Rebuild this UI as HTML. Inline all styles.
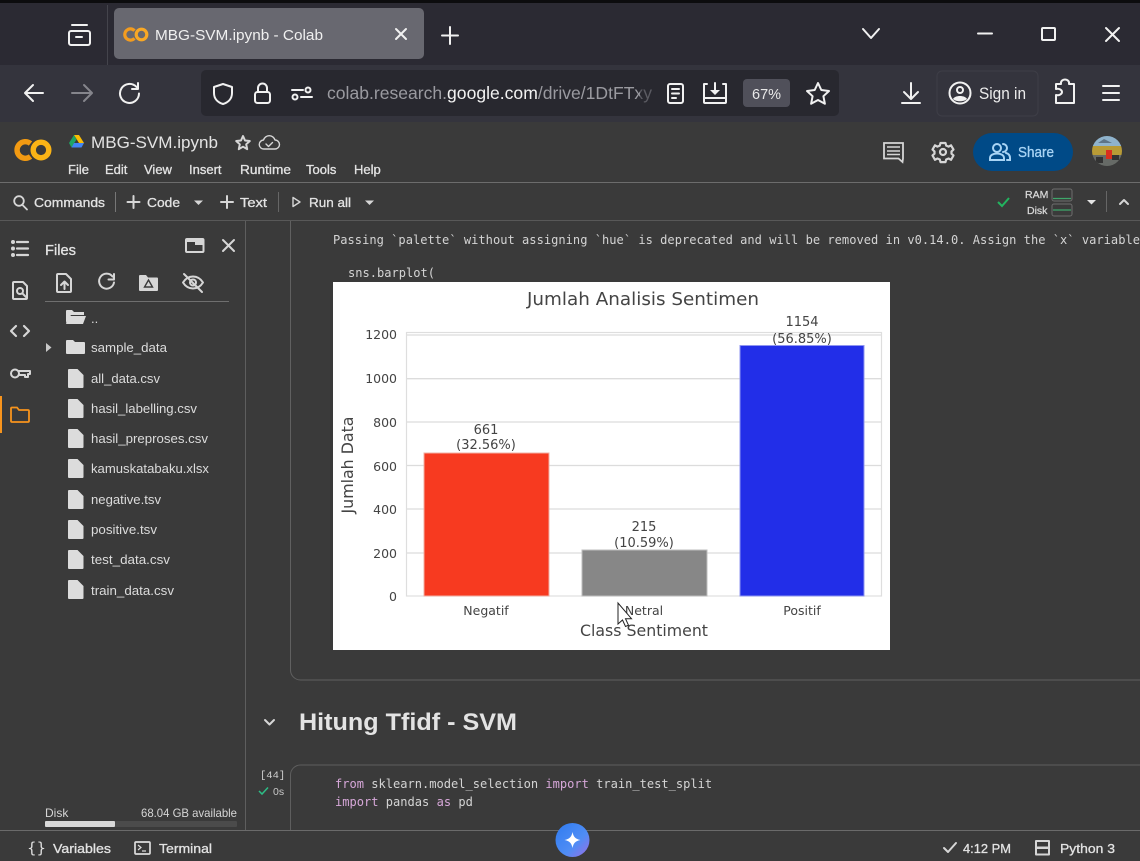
<!DOCTYPE html>
<html lang="en"><head><meta charset="utf-8"><title>MBG-SVM.ipynb - Colab</title>
<style>
html,body{margin:0;padding:0;width:1140px;height:861px;overflow:hidden;background:#3a3a3a}
svg{display:block;filter:blur(.35px)}
text{font-family:"Liberation Sans",sans-serif;white-space:pre}
text.m{font-family:"DejaVu Sans Mono","Liberation Mono",monospace;font-size:12.05px;fill:#d4d4d4}
text.d,.d text{font-family:"DejaVu Sans",sans-serif;fill:#444}
.f{font-size:13px;fill:#dcdcdc}
.w{font-size:13px;fill:#e3e3e3;stroke:#e3e3e3;stroke-width:.3px}
.i{fill:none;stroke:#f1f1f1;stroke-width:2;stroke-linecap:round;stroke-linejoin:round}
.g{fill:none;stroke:#d6d6d6;stroke-width:2;stroke-linecap:round;stroke-linejoin:round}
</style></head><body>
<svg width="1140" height="861" viewBox="0 0 1140 861" xmlns="http://www.w3.org/2000/svg">
<!-- browser chrome -->
<rect width="1140" height="65" fill="#2b2a33"/>
<rect width="1140" height="3" fill="#0c0c0e"/>
<rect x="0" y="65" width="1140" height="57" fill="#34343d"/>
<rect x="107" y="5" width="1" height="60" fill="#44444c"/>
<rect x="114" y="8" width="310" height="51" rx="5" fill="#686870"/>
<g class="i"><rect x="69" y="31" width="21" height="14" rx="2"/><path d="M72 25h15M76 37h6"/></g>
<path d="M134.500 30.700a5.600 5.600 0 1 0 0 7.600" fill="none" stroke="#f39c1f" stroke-width="3.200"/>
<circle cx="141.500" cy="34.500" r="5.300" fill="none" stroke="#f9a825" stroke-width="3.200"/>
<text x="155" y="40" font-size="15" fill="#f0f0f0" textLength="168" lengthAdjust="spacingAndGlyphs">MBG-SVM.ipynb - Colab</text>
<path class="i" d="M396 29l10 10M406 29l-10 10"/>
<path class="i" d="M450 27v17M442 35.500h16"/>
<path class="i" d="M863 29l8 9 8-9" stroke-width="1.700"/>
<path class="i" d="M978 33.500h14" stroke-width="1.700"/>
<rect class="i" x="1042" y="28" width="13" height="12" rx="1" stroke-width="1.800"/>
<path class="i" d="M1106 28l13 13M1119 28l-13 13" stroke-width="1.800"/>
<path class="i" d="M43 93H25M33 85l-8 8 8 8" stroke-width="2.200"/>
<path class="i" d="M91 93H72M84 85l8 8-8 8" style="stroke:#85858c"/>
<path class="i" d="M136.500 87a9.500 9.500 0 1 0 2.500 6.500M138 83v6h-6"/>
<rect x="201" y="70" width="638" height="46" rx="5" fill="#28282f"/>
<path class="i" d="M223 84l9 3v6c0 6-4 9.500-9 11-5-1.500-9-5-9-11v-6z"/>
<g class="i"><rect x="255" y="92" width="15" height="11" rx="2.500"/><path d="M258 92v-4a4.500 4.500 0 0 1 9 0v4"/></g>
<g class="i" stroke-width="1.800"><path d="M292 90h11M301 97h11"/><circle cx="308" cy="90" r="2.500"/><circle cx="295" cy="97" r="2.500"/></g>
<text x="327" y="99" font-size="17.500" fill="#9a9aa0" textLength="325" lengthAdjust="spacingAndGlyphs">colab.research.<tspan fill="#f2f2f2">google.com</tspan>/drive/1DtFTxy</text>
<rect x="640" y="70" width="16" height="46" fill="#28282f" opacity=".55"/>
<g class="i" stroke-width="1.800"><rect x="668" y="84" width="15" height="19" rx="2"/><path d="M672 89h7M672 93.500h7M672 98h4"/></g>
<g class="i" stroke-width="1.800"><path d="M707 84h-3v18a1 1 0 0 0 1 1h20a1 1 0 0 0 1-1V84h-3M704 98h22"/><path d="M715 83v10"/></g><path d="M710 90h10l-5 5z" fill="#f1f1f1"/>
<rect x="743" y="79" width="47" height="28" rx="4" fill="#50505a"/>
<text x="752" y="99" font-size="14.500" fill="#e8e8e8">67%</text>
<path class="i" d="M818 83l3.300 7 7.700 1-5.600 5.200 1.500 7.600-6.900-3.800-6.900 3.800 1.500-7.600-5.600-5.200 7.700-1z"/>
<path class="i" d="M911 83v15M904 92l7 7 7-7M902 103h18"/>
<rect x="937" y="71" width="101" height="45" rx="5" fill="none" stroke="#3e3e47"/>
<g class="i"><circle cx="960" cy="93" r="10.500"/><circle cx="960" cy="90" r="3"/></g><path d="M953 99c2-4 12-4 14 0-3 3-11 3-14 0z" fill="#f1f1f1"/>
<text x="979" y="99" font-size="16.500" fill="#ececec" textLength="47" lengthAdjust="spacingAndGlyphs">Sign in</text>
<path class="i" d="M1056 103v-8c3 1 6-1 6-3s-3-4-6-3v-5h5c-1-6 9-6 8 0h5v19z" stroke-width="1.900"/>
<path class="i" d="M1103 86h16M1103 93h16M1103 100h16"/>
<!-- colab header -->
<rect x="0" y="122" width="1140" height="61" fill="#3a3a3a"/>
<rect x="0" y="182" width="1140" height="1" fill="#6c6c6c"/>
<path d="M30.500 143.500a8.300 8.300 0 1 0 0 13" fill="none" stroke="#f29a12" stroke-width="5.400"/>
<circle cx="41" cy="150" r="7.800" fill="none" stroke="#fbb416" stroke-width="5.400"/>
<path d="M74 135h5l5 8h-5z" fill="#fbbc04"/><path d="M74 135l-5 8 2.500 4.500 5-8z" fill="#1fa463"/><path d="M71.500 147.500h10l2.500-4.500H74z" fill="#4285f4"/>
<text x="91" y="148" font-size="17" fill="#e3e3e3" textLength="127" lengthAdjust="spacingAndGlyphs">MBG-SVM.ipynb</text>
<path class="g" stroke-width="1.700" d="M243 136l2 4.500 4.800.5-3.600 3.300 1 4.900-4.200-2.500-4.200 2.500 1-4.900-3.600-3.300 4.800-.5z"/>
<path class="g" d="M266 149h-2a4.500 4.500 0 0 1-.5-9 6 6 0 0 1 11.500 0 4.500 4.500 0 0 1 0 9zM266 144l2.500 2.500 4-4" style="stroke-width:1.400"/>
<g style="font-size:13.500px">
<text x="68" y="174" class="w" style="font-size:13px">File</text>
<text x="105" y="174" class="w" style="font-size:13px">Edit</text>
<text x="144" y="174" class="w" style="font-size:13px">View</text>
<text x="189" y="174" class="w" style="font-size:13px">Insert</text>
<text x="240" y="174" class="w" style="font-size:13px" textLength="51" lengthAdjust="spacingAndGlyphs">Runtime</text>
<text x="306" y="174" class="w" style="font-size:13px">Tools</text>
<text x="354" y="174" class="w" style="font-size:13px">Help</text>
</g>
<path d="M884 143h19v15.500l-.5 3.500-4-3.500h-14.500z" fill="none" stroke="#d6d6d6" stroke-width="1.800"/><path d="M887 147h13M887 151h13M887 154.500h13" stroke="#d6d6d6" stroke-width="1.600"/>
<g class="g" style="stroke-width:2.200"><circle cx="943" cy="152" r="3"/><path d="M940.500 143h5l.7 2.600 2.400 1 2.400-1.300 2.500 4.300-2 1.800v2.300l2 1.800-2.500 4.300-2.400-1.300-2.400 1-.7 2.600h-5l-.7-2.600-2.400-1-2.400 1.300-2.500-4.300 2-1.800v-2.300l-2-1.800 2.500-4.300 2.400 1.300 2.400-1z"/></g>
<rect x="973" y="133" width="100" height="38" rx="19" fill="#004a87"/>
<g fill="none" stroke="#a8d4f5" stroke-width="2" stroke-linecap="round"><circle cx="997" cy="148" r="4"/><path d="M990 160v-2c0-6 14-6 14 0v2zM1003 144a4 4 0 0 1 0 8M1007 160h3v-2c0-3-2-4.500-4-5"/></g>
<text x="1018" y="157" font-size="14.500" fill="#a8d4f5" stroke="#a8d4f5" stroke-width=".3" textLength="36" lengthAdjust="spacingAndGlyphs">Share</text>
<clipPath id="av"><circle cx="1107" cy="151" r="15"/></clipPath>
<g clip-path="url(#av)"><rect x="1092" y="136" width="30" height="10" fill="#8fb3cc"/><rect x="1092" y="146" width="30" height="9" fill="#b89b36"/><rect x="1092" y="155" width="30" height="12" fill="#666a66"/><rect x="1106" y="150" width="6" height="9" fill="#d8301f"/><path d="M1098 143l6-4 8 4z" fill="#5d7488"/><rect x="1112" y="155" width="7" height="5" fill="#333"/><rect x="1096" y="157" width="7" height="6" fill="#333"/></g>
<!-- toolbar -->
<rect x="0" y="183" width="1140" height="38" fill="#3a3a3a"/>
<rect x="0" y="220" width="1140" height="1" fill="#585858"/>
<g class="g" style="stroke-width:1.800"><circle cx="19" cy="201" r="4.800"/><path d="M22.500 205l4.500 4.500"/></g>
<text x="34" y="207" class="w" textLength="71" lengthAdjust="spacingAndGlyphs">Commands</text>
<rect x="115" y="192" width="1" height="20" fill="#777"/>
<path class="g" d="M133.500 196v12M127.500 202h12"/>
<text x="147" y="207" class="w" textLength="33" lengthAdjust="spacingAndGlyphs">Code</text>
<path d="M194 200.500h9l-4.500 4.500z" fill="#d6d6d6"/>
<path class="g" d="M227 196v12M221 202h12"/>
<text x="240" y="207" class="w" textLength="27" lengthAdjust="spacingAndGlyphs">Text</text>
<rect x="278" y="192" width="1" height="20" fill="#666"/>
<path class="g" d="M293 197.500l7 4.500-7 4.500z" style="stroke-width:1.400"/>
<text x="309" y="207" class="w" textLength="42" lengthAdjust="spacingAndGlyphs">Run all</text>
<path d="M365 200.500h9l-4.500 4.500z" fill="#d6d6d6"/>
<path d="M998 202l4 4 7-8" fill="none" stroke="#22b45f" stroke-width="2"/>
<text x="1025" y="198" font-size="10.500" fill="#d8d8d8" stroke="#d8d8d8" stroke-width=".25">RAM</text>
<text x="1027" y="214" font-size="10.500" fill="#d8d8d8" stroke="#d8d8d8" stroke-width=".25">Disk</text>
<rect x="1052" y="189" width="20" height="12" rx="2" fill="none" stroke="#6d6d6d"/><path d="M1053 198.500h18" stroke="#3fa66a" stroke-width="1.200"/>
<rect x="1052" y="204" width="20" height="12" rx="2" fill="none" stroke="#6d6d6d"/><path d="M1053 210h18" stroke="#3fa66a" stroke-width="1.200"/>
<path d="M1087 200h9l-4.500 4.500z" fill="#e4e4e4"/>
<rect x="1106" y="191" width="1" height="21" fill="#666"/>
<path class="g" d="M1120 204l4-4 4 4"/>
<!-- side panel -->
<rect x="245" y="221" width="1" height="610" fill="#5e5e5e"/>
<g class="g" style="stroke-width:2.200"><path d="M17 242h11M17 248.500h11M17 255h11"/></g>
<g fill="#d6d6d6"><circle cx="13" cy="242" r="2"/><circle cx="13" cy="248.500" r="2"/><circle cx="13" cy="255" r="2"/></g>
<g class="g"><path d="M14 282h9l4 4v12a1 1 0 0 1-1 1H14a1 1 0 0 1-1-1v-15a1 1 0 0 1 1-1z"/><circle cx="20" cy="291" r="3"/><path d="M22.500 293.500l3.500 3.500"/></g>
<path class="g" d="M16 326l-5 5 5 5M24 326l5 5-5 5" style="stroke-width:2.200"/>
<g class="g"><circle cx="15" cy="373.500" r="4"/><path d="M19 371h11v3h-2v3h-3v-2h-6"/></g>
<rect x="0" y="396" width="2" height="37" fill="#f7941d"/>
<path d="M11 408.500a1 1 0 0 1 1-1h5l2 2.500h9a1 1 0 0 1 1 1v10a1 1 0 0 1-1 1H12a1 1 0 0 1-1-1z" fill="none" stroke="#f7941d" stroke-width="1.800"/>
<text x="45" y="255" font-size="14.500" fill="#e3e3e3" stroke="#e3e3e3" stroke-width=".3" textLength="31" lengthAdjust="spacingAndGlyphs">Files</text>
<g class="g"><rect x="186" y="239" width="17.500" height="13" rx="1"/></g><rect x="186" y="239" width="17.500" height="3" fill="#d6d6d6"/><rect x="195" y="239" width="8.500" height="6" fill="#d6d6d6"/>
<path class="g" d="M223 240l11 11M234 240l-11 11"/>
<g class="g"><path d="M58 274h8l5 5v12a1 1 0 0 1-1 1H58a1 1 0 0 1-1-1v-16a1 1 0 0 1 1-1z"/><path d="M64.500 289v-7M61 285l3.500-3.500L68 285"/></g>
<path class="g" d="M112.500 276.500a7.500 7.500 0 1 0 1.500 6M114 274v5.500h-5.500"/>
<path d="M139 276a1 1 0 0 1 1-1h6l2 2.500h9a1 1 0 0 1 1 1v11.500a1 1 0 0 1-1 1h-17a1 1 0 0 1-1-1z" fill="#d6d6d6"/><path d="M148.500 280l4 7h-8z" fill="none" stroke="#3a3a3a" stroke-width="1.400"/>
<g class="g"><path d="M183 282.500c5-8 15-8 20 0-5 8-15 8-20 0z"/><circle cx="193" cy="282.500" r="3"/><path d="M184 274l18 18"/></g>
<rect x="45" y="301" width="184" height="1" fill="#6f6f6f"/>
<path d="M66 323v-12a1 1 0 0 1 1-1h5l2 2h10v3H71z" fill="#dcdcdc"/><path d="M69 316h17l-3 8H66z" fill="#dcdcdc"/>
<text x="91" y="323" class="f">..</text>
<path d="M46 343l5.500 4.500L46 352z" fill="#c8c8c8"/>
<path d="M66 341a1 1 0 0 1 1-1h6l2 2h9a1 1 0 0 1 1 1v10a1 1 0 0 1-1 1H67a1 1 0 0 1-1-1z" fill="#dcdcdc"/>
<text x="91" y="352" class="f" textLength="76" lengthAdjust="spacingAndGlyphs">sample_data</text>
<defs><path id="fi" d="M0 0h9.500l6 6v12a1 1 0 0 1-1 1h-13.500a1 1 0 0 1-1-1V1a1 1 0 0 1 1-1z" fill="#dcdcdc"/></defs>
<use href="#fi" x="68" y="369"/><text x="91" y="383" class="f" textLength="69" lengthAdjust="spacingAndGlyphs">all_data.csv</text>
<use href="#fi" x="68" y="399"/><text x="91" y="413" class="f" textLength="106" lengthAdjust="spacingAndGlyphs">hasil_labelling.csv</text>
<use href="#fi" x="68" y="429"/><text x="91" y="443" class="f" textLength="117" lengthAdjust="spacingAndGlyphs">hasil_preproses.csv</text>
<use href="#fi" x="68" y="459"/><text x="91" y="473" class="f" textLength="118" lengthAdjust="spacingAndGlyphs">kamuskatabaku.xlsx</text>
<use href="#fi" x="68" y="490"/><text x="91" y="504" class="f" textLength="70" lengthAdjust="spacingAndGlyphs">negative.tsv</text>
<use href="#fi" x="68" y="520"/><text x="91" y="534" class="f" textLength="66" lengthAdjust="spacingAndGlyphs">positive.tsv</text>
<use href="#fi" x="68" y="550"/><text x="91" y="564" class="f" textLength="79" lengthAdjust="spacingAndGlyphs">test_data.csv</text>
<use href="#fi" x="68" y="580"/><text x="91" y="595" class="f" textLength="83" lengthAdjust="spacingAndGlyphs">train_data.csv</text>
<text x="45" y="817" font-size="12" fill="#d6d6d6">Disk</text>
<text x="237" y="817" font-size="12" fill="#d6d6d6" text-anchor="end" textLength="96" lengthAdjust="spacingAndGlyphs">68.04 GB available</text>
<rect x="45" y="821" width="192" height="6" rx="1" fill="#4b4b4b"/>
<rect x="45" y="821" width="70" height="6" rx="1" fill="#d9d9d9"/>
<!-- output cell -->
<path d="M290.500 221v449a10 10 0 0 0 10 10H1140" fill="none" stroke="#606060"/>
<text x="333" y="244" class="m" textLength="807" lengthAdjust="spacing">Passing `palette` without assigning `hue` is deprecated and will be removed in v0.14.0. Assign the `x` variable</text>
<text x="348" y="277" class="m">sns.barplot(</text>
<!-- chart -->
<rect x="333" y="282" width="557" height="368" fill="#fff"/>
<text x="643" y="305" class="d" font-size="18" text-anchor="middle" textLength="232" lengthAdjust="spacingAndGlyphs">Jumlah Analisis Sentimen</text>
<g stroke="#dcdcdc" stroke-width="1.300"><path d="M407 335h474M407 378.700h474M407 422h474M407 465.500h474M407 509h474M407 553h474"/></g>
<rect x="406.500" y="332.500" width="475" height="263.500" fill="none" stroke="#dedede" stroke-width="1.200"/>
<rect x="424" y="453" width="125" height="143" fill="#f73a20" stroke="#f0b0a4"/>
<rect x="582" y="550" width="125" height="46" fill="#878787" stroke="#bdbdbd"/>
<rect x="740" y="345.500" width="124" height="250.500" fill="#222ee8" stroke="#8f96f0"/>
<g class="d" font-size="12.500" text-anchor="end"><text x="397" y="339">1200</text><text x="397" y="383">1000</text><text x="397" y="427">800</text><text x="397" y="471">600</text><text x="397" y="514">400</text><text x="397" y="558">200</text><text x="397" y="601">0</text></g>
<g class="d" font-size="13" text-anchor="middle">
<text x="486" y="434">661</text><text x="486" y="449">(32.56%)</text>
<text x="644" y="531">215</text><text x="644" y="547">(10.59%)</text>
<text x="802" y="326">1154</text><text x="802" y="343">(56.85%)</text>
</g>
<g class="d" font-size="12.500" text-anchor="middle">
<text x="486" y="615">Negatif</text><text x="644" y="615">Netral</text><text x="802" y="615">Positif</text></g>
<text x="644" y="636" class="d" font-size="16" text-anchor="middle" textLength="128" lengthAdjust="spacingAndGlyphs">Class Sentiment</text>
<text transform="translate(353 465) rotate(-90)" class="d" font-size="16" text-anchor="middle" textLength="97" lengthAdjust="spacingAndGlyphs">Jumlah Data</text>
<path d="M618 603v21l4.500-4 3 6.500 3-1.300-3-6.500h6z" fill="#fff" stroke="#222" stroke-width="1"/>
<!-- heading -->
<path class="g" d="M265 720l4.500 4.500 4.500-4.500"/>
<text x="299" y="730" font-size="24" font-weight="700" fill="#e3e3e3" textLength="218" lengthAdjust="spacingAndGlyphs">Hitung Tfidf - SVM</text>
<!-- code cell -->
<text x="260" y="778" font-size="10.500" fill="#cfcfcf" style="font-family:'Liberation Mono',monospace">[44]</text>
<path d="M259 791l3 3 6-6.500" fill="none" stroke="#2dbd86" stroke-width="1.500"/>
<text x="273" y="795" font-size="10.500" fill="#c8c8c8">0s</text>
<path d="M290.500 831V775a10 10 0 0 1 10-10H1140" fill="none" stroke="#5e5e5e"/>
<text x="335" y="788" class="m"><tspan fill="#d6a7d8">from</tspan> sklearn.model_selection <tspan fill="#d6a7d8">import</tspan> train_test_split</text>
<text x="335" y="806" class="m"><tspan fill="#d6a7d8">import</tspan> pandas <tspan fill="#d6a7d8">as</tspan> pd</text>
<!-- status bar -->
<rect x="0" y="831" width="1140" height="30" fill="#3a3a3a"/>
<rect x="0" y="830" width="1140" height="1" fill="#6a6a6a"/>
<text x="27" y="853" font-size="15" fill="#e0e0e0" style="font-family:'DejaVu Sans',sans-serif">{}</text>
<text x="53" y="853" class="w" textLength="58" lengthAdjust="spacingAndGlyphs">Variables</text>
<rect x="135" y="842" width="15" height="12" rx="1" fill="none" stroke="#dcdcdc" stroke-width="1.700"/><path d="M138 845l3 2.500-3 2.500M142 851h4" fill="none" stroke="#dcdcdc" stroke-width="1.200"/>
<text x="159" y="853" class="w" textLength="53" lengthAdjust="spacingAndGlyphs">Terminal</text>
<defs><linearGradient id="gm" x1="0" y1="0" x2="1" y2="1"><stop offset="0" stop-color="#2f7bf0"/><stop offset=".6" stop-color="#4f8df5"/><stop offset="1" stop-color="#9a6ee6"/></linearGradient></defs>
<circle cx="572.500" cy="840" r="17" fill="url(#gm)"/>
<path d="M572.500 832c1 5 3 7 8 8-5 1-7 3-8 8-1-5-3-7-8-8 5-1 7-3 8-8z" fill="#fff"/>
<path class="g" d="M944 848l4 4 8-9"/>
<text x="963" y="853" class="w" textLength="48" lengthAdjust="spacingAndGlyphs">4:12 PM</text>
<g class="g"><rect x="1036" y="841" width="13" height="6.500"/><rect x="1036" y="848" width="13" height="6.500"/></g>
<text x="1060" y="853" class="w" textLength="55" lengthAdjust="spacingAndGlyphs">Python 3</text>
</svg>
</body></html>
